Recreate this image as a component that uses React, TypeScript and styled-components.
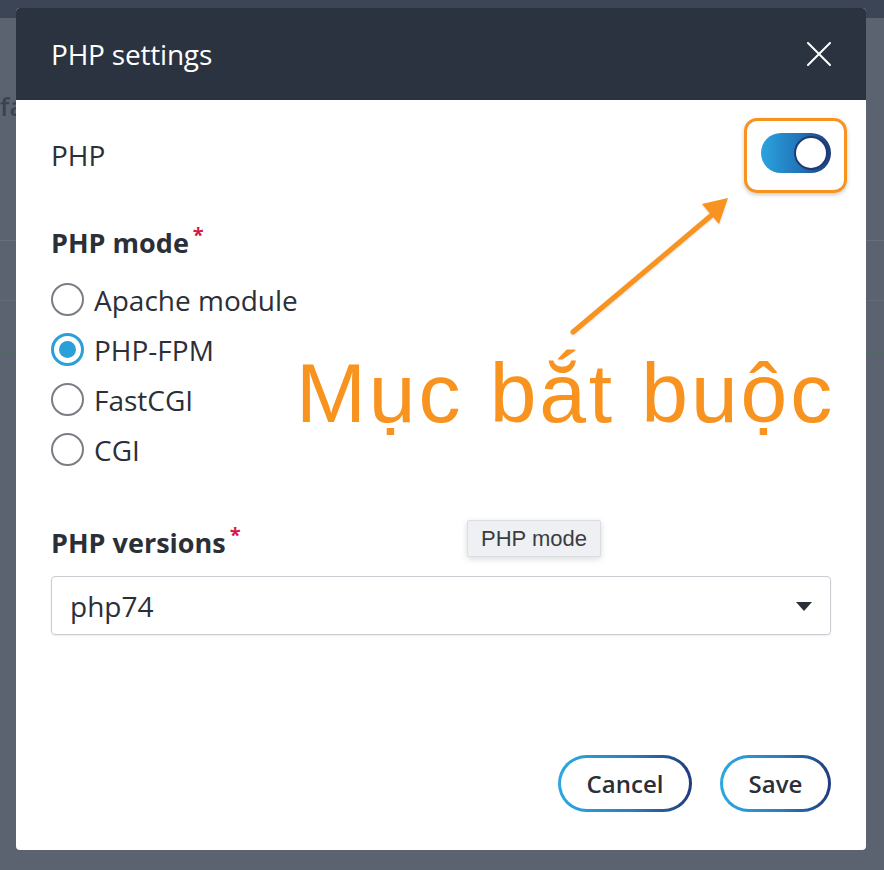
import React, {useState} from "react";
import styled, {createGlobalStyle, css} from "styled-components";

const GlobalStyle = createGlobalStyle`
  html, body {
    margin: 0;
    padding: 0;
    background: #5b6270;
  }
  * {
    box-sizing: border-box;
  }
`

// dimmed page behind the dialog
const Backdrop = styled.div`
  position: relative;
  width: 884px;
  height: 870px;
  padding: 8px 18px 20px 16px;
  background:
    linear-gradient(#3c4555, #3c4555) 0 0 / 100% 18px no-repeat,
    linear-gradient(#667079, #667079) 0 240px / 100% 1px no-repeat,
    linear-gradient(#636a75, #636a75) 0 300px / 100% 1px no-repeat,
    linear-gradient(#4f6a66, #4f6a66) 0 352px / 100% 2px no-repeat,
    #5b6270;
  font-family: "Open Sans", "Noto Sans", sans-serif;
  overflow: hidden;
`
const BehindText = styled.span`
  position: absolute;
  left: 0;
  top: 88px;
  font-size: 26px;
  font-weight: 600;
  color: #2f3540;
  opacity: 0.7;
`

const Modal = styled.div`
  position: relative;
  width: 850px;
  height: 842px;
  background: #ffffff;
  border-radius: 4px;
  display: flex;
  flex-direction: column;
`
const Header = styled.div`
  height: 92px;
  padding: 0 34px 0 35px;
  background: #2b3240;
  border-radius: 4px 4px 0 0;
  display: flex;
  align-items: center;
  justify-content: space-between;
`
const Title = styled.h2`
  margin: 0;
  font-size: 28px;
  font-weight: 400;
  color: #ffffff;
  letter-spacing: -0.2px;
`
const CloseButton = styled.button`
  width: 26px;
  height: 26px;
  padding: 0;
  border: none;
  background: none;
  display: flex;
  align-items: center;
  justify-content: center;
  cursor: pointer;
`

const Body = styled.div`
  flex: 1;
  padding: 22px 35px 0 35px;
  display: flex;
  flex-direction: column;
`
const ToggleRow = styled.div`
  height: 66px;
  display: flex;
  align-items: center;
  justify-content: space-between;
`
const RowLabel = styled.span`
  font-size: 28px;
  color: #2b2f38;
`
const ToggleWrap = styled.div`
  position: relative;
  /* orange annotation frame drawn over the switch */
  &::after {
    content: "";
    position: absolute;
    left: -17px;
    right: -16px;
    top: -15px;
    bottom: -15px;
    border: 3px solid #f7931e;
    border-radius: 13px;
    box-shadow: 0 2px 4px rgba(0, 0, 0, 0.2);
    pointer-events: none;
  }
`
const Toggle = styled.button<{ $on: boolean }>`
  position: relative;
  width: 70px;
  height: 40px;
  padding: 0;
  border: none;
  border-radius: 20px;
  cursor: pointer;
  background: ${({$on}) => $on ? "linear-gradient(90deg, #2ba3df 0%, #2175b9 55%, #1e3a76 100%)" : "#c7ccd3"};
`
const Knob = styled.span<{ $on: boolean }>`
  position: absolute;
  top: 3px;
  left: ${({$on}) => $on ? "33px" : "3px"};
  width: 34px;
  height: 34px;
  border-radius: 50%;
  background: #ffffff;
  border: 2px solid #1f3a74;
`

const Section = styled.div<{ $top: number }>`
  margin-top: ${({$top}) => $top}px;
  display: flex;
  flex-direction: column;
`
const FieldLabel = styled.div`
  font-size: 27px;
  font-weight: 700;
  color: #2b2f38;
  height: 38px;
  line-height: 38px;
`
const Required = styled.sup`
  color: #d61a46;
  font-size: 20px;
  margin-left: 4px;
  vertical-align: 11px;
  line-height: 0;
`
const RadioList = styled.div`
  margin-top: 21px;
  display: flex;
  flex-direction: column;
  gap: 17px;
`
const RadioItem = styled.label`
  display: flex;
  align-items: center;
  gap: 10px;
  height: 33px;
  font-size: 28px;
  color: #2b2f38;
  cursor: pointer;
`
const RadioCircle = styled.span<{ $checked: boolean }>`
  width: 33px;
  height: 33px;
  border-radius: 50%;
  flex-shrink: 0;
  display: flex;
  align-items: center;
  justify-content: center;
  border: 2px solid #7a7d83;
  ${({$checked}) => $checked && css`
    border: 3px solid #2a9fd8;
    &::after {
      content: "";
      width: 17px;
      height: 17px;
      border-radius: 50%;
      background: #2a9fd8;
    }
  `}
`

const Select = styled.div`
  margin-top: 14px;
  height: 59px;
  border: 1px solid #c9ccd1;
  border-radius: 4px;
  box-shadow: 0 1px 2px rgba(0, 0, 0, 0.08);
  padding: 0 18px 0 18px;
  display: flex;
  align-items: center;
  justify-content: space-between;
  font-size: 28px;
  color: #2b2f38;
`
const Caret = styled.span`
  width: 0;
  height: 0;
  border-left: 8px solid transparent;
  border-right: 8px solid transparent;
  border-top: 9px solid #2b2f38;
  margin-top: 2px;
`

const Footer = styled.div`
  margin-top: auto;
  padding-bottom: 38px;
  display: flex;
  justify-content: flex-end;
  gap: 28px;
`
const PillButton = styled.button<{ $width: number }>`
  width: ${({$width}) => $width}px;
  height: 57px;
  border-radius: 29px;
  border: 3px solid transparent;
  background:
    linear-gradient(#ffffff, #ffffff) padding-box,
    linear-gradient(90deg, #2aa9e0 0%, #2a7fc0 55%, #223a7b 100%) border-box;
  font-family: "Open Sans", "Noto Sans", sans-serif;
  font-size: 24px;
  font-weight: 600;
  color: #2b2f38;
  cursor: pointer;
`

const Tooltip = styled.div`
  position: absolute;
  left: 451px;
  top: 512px;
  padding: 0 13px;
  height: 37px;
  display: flex;
  align-items: center;
  background: #eef0f3;
  border: 1px solid #dadde2;
  border-radius: 2px;
  box-shadow: 0 2px 6px rgba(0, 0, 0, 0.15);
  font-family: "Liberation Sans", Arial, sans-serif;
  font-size: 22px;
  color: #3a3d42;
`

// annotation overlay (arrow + caption)
const Annotation = styled.div`
  position: absolute;
  left: 280px;
  top: 343px;
  font-family: "Liberation Sans", Arial, "Noto Sans", sans-serif;
  font-size: 84px;
  line-height: 84px;
  letter-spacing: 2.9px;
  color: #f7931e;
  white-space: nowrap;
  pointer-events: none;
`
const ArrowSvg = styled.svg`
  position: absolute;
  left: 0;
  top: 0;
  pointer-events: none;
  filter: drop-shadow(0 1px 1px rgba(0, 0, 0, 0.15));
`

const modes = ["Apache module", "PHP-FPM", "FastCGI", "CGI"]

const CloseIcon = () => (
    <svg width="24" height="24" viewBox="0 0 24 24">
        <path d="M1 1 L23 23 M23 1 L1 23" stroke="#ffffff" strokeWidth="2" strokeLinecap="round"/>
    </svg>
)

export default function App() {
    const [enabled, setEnabled] = useState(true)
    const [mode, setMode] = useState("PHP-FPM")

    return <>
        <GlobalStyle/>
        <Backdrop>
            <BehindText>fa</BehindText>
            <Modal>
                <Header>
                    <Title>PHP settings</Title>
                    <CloseButton aria-label="Close"><CloseIcon/></CloseButton>
                </Header>
                <Body>
                    <ToggleRow>
                        <RowLabel>PHP</RowLabel>
                        <ToggleWrap>
                            <Toggle $on={enabled} onClick={() => setEnabled(!enabled)}>
                                <Knob $on={enabled}/>
                            </Toggle>
                        </ToggleWrap>
                    </ToggleRow>

                    <Section $top={36}>
                        <FieldLabel>PHP mode<Required>*</Required></FieldLabel>
                        <RadioList>
                            {modes.map(m => (
                                <RadioItem key={m} onClick={() => setMode(m)}>
                                    <RadioCircle $checked={mode === m}/>
                                    {m}
                                </RadioItem>
                            ))}
                        </RadioList>
                    </Section>

                    <Section $top={58}>
                        <FieldLabel>PHP versions<Required>*</Required></FieldLabel>
                        <Select>
                            php74
                            <Caret/>
                        </Select>
                    </Section>

                    <Footer>
                        <PillButton $width={134}>Cancel</PillButton>
                        <PillButton $width={111}>Save</PillButton>
                    </Footer>
                </Body>

                <Tooltip>PHP mode</Tooltip>

                <ArrowSvg width="850" height="842">
                    <line x1="557" y1="324" x2="697" y2="206" stroke="#f7931e" strokeWidth="5" strokeLinecap="round"/>
                    <polygon points="712,190 686,196 703,216" fill="#f7931e"/>
                </ArrowSvg>
                <Annotation>Mục bắt buộc</Annotation>
            </Modal>
        </Backdrop>
    </>
}
